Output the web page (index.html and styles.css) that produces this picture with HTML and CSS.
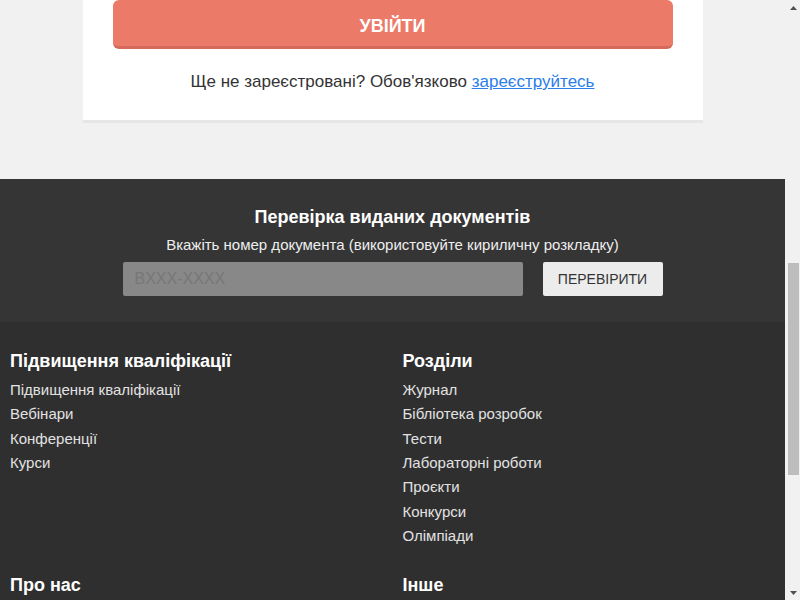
FILE: index.html
```html
<!DOCTYPE html>
<html lang="uk">
<head>
<meta charset="utf-8">
<title>Вхід</title>
<link rel="stylesheet" href="styles.css">
</head>
<body>
<div class="page">
  <main class="main">
    <section class="login-card">
      <button class="login-btn" type="button">УВІЙТИ</button>
      <p class="register">Ще не зареєстровані? Обов'язково <a href="#">зареєструйтесь</a></p>
    </section>
  </main>
  <section class="check">
    <h2 class="check-title">Перевірка виданих документів</h2>
    <p class="check-sub">Вкажіть номер документа (використовуйте кириличну розкладку)</p>
    <form class="check-form">
      <input class="check-input" type="text" placeholder="BXXX-XXXX">
      <button class="check-btn" type="button">ПЕРЕВІРИТИ</button>
    </form>
  </section>
  <footer class="footer">
    <div class="footer-grid">
      <div class="footer-col">
        <h3 class="footer-title">Підвищення кваліфікації</h3>
        <ul class="footer-list">
          <li><a href="#">Підвищення кваліфікації</a></li>
          <li><a href="#">Вебінари</a></li>
          <li><a href="#">Конференції</a></li>
          <li><a href="#">Курси</a></li>
        </ul>
      </div>
      <div class="footer-col">
        <h3 class="footer-title">Розділи</h3>
        <ul class="footer-list">
          <li><a href="#">Журнал</a></li>
          <li><a href="#">Бібліотека розробок</a></li>
          <li><a href="#">Тести</a></li>
          <li><a href="#">Лабораторні роботи</a></li>
          <li><a href="#">Проєкти</a></li>
          <li><a href="#">Конкурси</a></li>
          <li><a href="#">Олімпіади</a></li>
        </ul>
      </div>
      <div class="footer-col">
        <h3 class="footer-title">Про нас</h3>
      </div>
      <div class="footer-col">
        <h3 class="footer-title">Інше</h3>
      </div>
    </div>
  </footer>
</div>
<div class="scrollbar" aria-hidden="true">
  <div class="sb-arrow">
    <svg width="7" height="4" viewBox="0 0 7 4"><path d="M3.5 0L7 4H0z" fill="#505050"/></svg>
  </div>
  <div class="sb-track">
    <div class="sb-thumb" style="margin-top:248px;height:212px"></div>
  </div>
  <div class="sb-arrow">
    <svg width="7" height="4" viewBox="0 0 7 4"><path d="M0 0H7L3.5 4z" fill="#505050"/></svg>
  </div>
</div>
</body>
</html>
```

FILE: styles.css
```css
html, body {
  margin: 0;
  padding: 0;
  height: 100%;
  overflow: hidden;
}
body {
  display: flex;
  background: #f1f1f1;
  font-family: "Liberation Sans", Arial, sans-serif;
  color: #333;
}
.page {
  flex: 1;
  min-width: 0;
  height: 100vh;
  overflow: hidden;
  background: #f1f1f1;
}
.main {
  padding-bottom: 59px;
}
.login-card {
  width: 620px;
  margin: 0 auto;
  background: #fff;
  box-sizing: border-box;
  padding: 0 30px 28px;
  box-shadow: 0 3px 0 #e6e6e6;
}
.login-btn {
  display: block;
  width: 100%;
  height: 49px;
  border: 0;
  border-bottom: 3px solid #d56a5b;
  border-radius: 6px;
  background: #ec7a68;
  color: #fff;
  font: bold 18px "Liberation Sans", Arial, sans-serif;
  padding: 6px 0 0;
  box-sizing: border-box;
  line-height: 40px;
}
.register {
  margin: 23px 0 0;
  text-align: center;
  font-size: 17px;
  line-height: 20px;
  color: #333;
}
.register a {
  color: #2b7de9;
  text-decoration: underline;
}
.check {
  background: #353535;
  padding: 26px 0 26px;
  text-align: center;
  color: #fff;
}
.check-title {
  margin: 0 0 6px;
  font-size: 18px;
  line-height: 24px;
  font-weight: bold;
}
.check-sub {
  margin: 0 0 7px;
  font-size: 15px;
  line-height: 20px;
  color: #eee;
}
.check-form {
  display: flex;
  justify-content: center;
  gap: 20px;
  margin: 0;
}
.check-input {
  width: 400px;
  height: 34px;
  box-sizing: border-box;
  border: 0;
  border-radius: 2px;
  background: #888;
  padding: 0 12px;
  font: 16px "Liberation Sans", Arial, sans-serif;
  color: #333;
}
.check-input::placeholder {
  color: #777;
}
.check-btn {
  width: 120px;
  height: 34px;
  border: 0;
  border-radius: 2px;
  background: #ececec;
  color: #333;
  font: 14px "Liberation Sans", Arial, sans-serif;
  padding: 0;
}
.footer {
  background: #2f2f2f;
  color: #fff;
  min-height: 400px;
}
.footer-grid {
  display: grid;
  grid-template-columns: 1fr 1fr;
  row-gap: 26px;
  padding-top: 28px;
}
.footer-col {
  padding: 0 10px;
}
.footer-title {
  margin: 0 0 6px;
  font-size: 18px;
  line-height: 22px;
  font-weight: bold;
  color: #fff;
}
.footer-list {
  list-style: none;
  margin: 0;
  padding: 0;
}
.footer-list li {
  font-size: 15px;
  line-height: 24.33px;
}
.footer-list a {
  color: #e2e2e2;
  text-decoration: none;
}
.scrollbar {
  flex: 0 0 15px;
  width: 15px;
  height: 100vh;
  display: flex;
  flex-direction: column;
  background: #f1f1f1;
}
.sb-arrow {
  height: 15px;
  display: flex;
  align-items: center;
  justify-content: center;
  padding-left: 1px;
}
.sb-arrow svg {
  display: block;
}
.sb-track {
  flex: 1;
  display: flex;
  flex-direction: column;
  align-items: center;
  padding-left: 1px;
}
.sb-thumb {
  width: 11px;
  background: #bdbdbd;
}
```
